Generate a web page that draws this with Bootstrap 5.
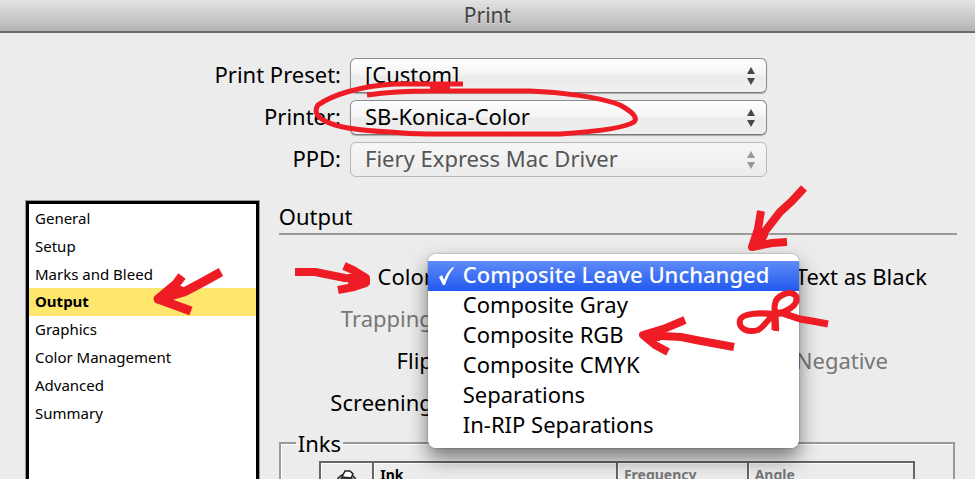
<!DOCTYPE html>
<html lang="en">
<head>
<meta charset="utf-8">
<meta name="viewport" content="width=device-width, initial-scale=1">
<title>Print</title>
<link href="https://cdn.jsdelivr.net/npm/bootstrap@5.3.0/dist/css/bootstrap.min.css" rel="stylesheet">
<style>
  body { background: #ececec; color: #000; font-family: "Noto Sans", "Open Sans", sans-serif; font-size: 22px; line-height: 30px; }
  .print-dialog { height: 100vh; overflow: hidden; }
  .title-strip { background: linear-gradient(#e4e4e4, #b4b4b4); border-bottom: 2px solid #6c6c6c; color: #444; }
  .title-strip h1 { font-size: 21px; line-height: 31px; font-weight: 400; text-shadow: 0 1px 0 #ddd; }
  .preset-grid { display: grid; grid-template-columns: 341fr 417fr 199fr; column-gap: 9px; row-gap: 7px; padding-top: 25px; }
  .preset-grid label { grid-column: 1; text-align: right; white-space: nowrap; line-height: 32px; }
  .mac-pick { position: relative; height: 35px; }
  .mac-pick select { appearance: none; width: 100%; height: 100%; padding: 0 36px 3px 14px; color: #000; font-size: 22px; line-height: 30px; border: 1px solid #8c8c8c; border-bottom-color: #777; border-radius: 6px; background: linear-gradient(#fff, #f4f4f4 45%, #ebebeb 55%, #f0f0f0); box-shadow: 0 1px 1px #aaa; }
  .mac-pick svg { position: absolute; right: 11px; top: 8px; width: 10px; height: 19px; fill: #484848; pointer-events: none; }
  .mac-pick select:disabled { color: #555; opacity: 1; border-color: #b8b8b8; background: linear-gradient(#f6f6f6, #ececec); box-shadow: none; }
  .mac-pick select:disabled + svg { fill: #999; }
  .work-area { padding: 24px 18px 0 26px; gap: 20px; }
  .section-list { flex: 0 0 25%; border: 3px solid #000; border-bottom: 0; outline: 1px solid #999; background: #fff; padding-top: 1px; }
  .section-list .list-group-item { border: 0; margin: 0; padding: 0 6px 2px; font-size: 15px; line-height: 26px; color: #000; background: transparent; }
  .section-list .list-group-item.active { background: #ffe76e; font-weight: 700; }
  .pane-title { font-size: 22px; line-height: 30px; padding-bottom: 2px; font-weight: 400; border-bottom: 2px solid #999; }
  .output-grid { display: grid; grid-template-columns: 162px 296px 1fr; column-gap: 9px; row-gap: 7px; margin-top: 25px; }
  .output-grid label { line-height: 32px; white-space: nowrap; }
  .output-grid > label { grid-column: 1; text-align: right; padding-right: 2px; }
  .tick-line { display: flex; align-items: flex-start; gap: 10px; padding-left: 13px; }
  .tick-line input { width: 18px; height: 18px; margin: 8px 0 0; }
  .dim { color: #777; }
  .pick-menu { top: -6px; left: 149px; width: 371px; padding: 7px 0; border: 0; border-radius: 8px; background: rgba(255,255,255,.99); box-shadow: 0 10px 20px rgba(0,0,0,.5), 0 0 2px rgba(0,0,0,.4); font-size: 22px; }
  .pick-menu .dropdown-item { position: relative; padding: 0 0 4px 35px; line-height: 26px; color: #000; }
  .pick-menu .dropdown-item.active { color: #fff; font-weight: 500; background: linear-gradient(#5f8bf8, #2059ee); }
  .pick-menu .dropdown-item svg { position: absolute; left: 10px; top: 5px; }
  .ink-box { border: 2px solid #999; box-shadow: inset 1px 1px 0 #fff; margin: 7px 2px 0 0; padding: 3px 38px 0 38px; }
  .ink-box legend { float: none; width: auto; font-size: 22px; line-height: 30px; margin: 0 0 0 -23px; padding: 0 2px; }
  .ink-table { width: 100%; border: 2px solid #666; table-layout: fixed; }
  .ink-table th { font-size: 14px; line-height: 20px; height: 40px; vertical-align: top; padding: 2px 7px 0 6px; border-right: 2px solid #666; box-shadow: inset 1px 1px 0 #fff; }
  .ink-table .col-print { width: 9%; padding-top: 6px; line-height: 16px; }
  .ink-table .col-ink { width: 41%; }
  .ink-table .col-freq { width: 22%; }
  .red-ink { position: absolute; left: 0; top: 0; width: 975px; height: 479px; pointer-events: none; z-index: 2000; fill: none; stroke: #ee1c25; stroke-width: 8; stroke-linejoin: round; }
</style>
<script src="https://cdn.jsdelivr.net/npm/bootstrap@5.3.0/dist/js/bootstrap.bundle.min.js"></script>
</head>
<body>
<div class="print-dialog d-flex flex-column position-relative">
  <header class="title-strip text-center flex-shrink-0"><h1 class="m-0">Print</h1></header>
  <form class="d-flex flex-column flex-grow-1">
    <div class="preset-grid">
      <label for="preset">Print Preset:</label>
      <div class="mac-pick"><select id="preset"><option>[Custom]</option></select><svg viewBox="0 0 10 19"><path d="M5 1l4 7H1zM1 12h8l-4 7z"/></svg></div>
      <label for="printer">Printer:</label>
      <div class="mac-pick"><select id="printer"><option>SB-Konica-Color</option></select><svg viewBox="0 0 10 19"><path d="M5 1l4 7H1zM1 12h8l-4 7z"/></svg></div>
      <label for="ppd">PPD:</label>
      <div class="mac-pick"><select id="ppd" disabled><option>Fiery Express Mac Driver</option></select><svg viewBox="0 0 10 19"><path d="M5 1l4 7H1zM1 12h8l-4 7z"/></svg></div>
    </div>
    <div class="work-area d-flex flex-grow-1">
      <nav class="section-list list-group rounded-0">
        <a href="#" class="list-group-item">General</a>
        <a href="#" class="list-group-item">Setup</a>
        <a href="#" class="list-group-item">Marks and Bleed</a>
        <a href="#" class="list-group-item active">Output</a>
        <a href="#" class="list-group-item">Graphics</a>
        <a href="#" class="list-group-item">Color Management</a>
        <a href="#" class="list-group-item">Advanced</a>
        <a href="#" class="list-group-item">Summary</a>
      </nav>
      <section class="flex-grow-1">
        <h2 class="pane-title m-0">Output</h2>
        <div class="output-grid position-relative">
          <label for="color">Color:</label>
          <div class="mac-pick"><select id="color"><option></option></select></div>
          <div class="tick-line"><input type="checkbox" id="textblack"><label for="textblack">Text as Black</label></div>
          <label for="trapping" class="dim">Trapping:</label>
          <div class="mac-pick"><select id="trapping" disabled><option></option></select></div>
          <label for="flip">Flip:</label>
          <div class="mac-pick"><select id="flip"><option></option></select></div>
          <div class="tick-line dim"><input type="checkbox" id="negative" disabled><label for="negative">Negative</label></div>
          <label for="screening">Screening:</label>
          <div class="mac-pick"><select id="screening"><option></option></select></div>
          <div class="pick-menu dropdown-menu show">
            <button type="button" class="dropdown-item active"><svg width="16" height="20" viewBox="0 0 16 20" fill="#fff"><path d="M1 11l3-2 2 5C8 8 11 4 15 1l1 1C12 6 9 12 7 19H5z"/></svg>Composite Leave Unchanged</button>
            <button type="button" class="dropdown-item">Composite Gray</button>
            <button type="button" class="dropdown-item">Composite RGB</button>
            <button type="button" class="dropdown-item">Composite CMYK</button>
            <button type="button" class="dropdown-item">Separations</button>
            <button type="button" class="dropdown-item">In-RIP Separations</button>
          </div>
        </div>
        <fieldset class="ink-box">
          <legend>Inks</legend>
          <table class="ink-table">
            <thead><tr>
              <th class="col-print text-center"><svg width="20" height="20" viewBox="0 0 20 20" stroke="#222" stroke-width="1.5"><path d="M2 9l4-3h10l3 3v7H2z" fill="#bbb"/><path d="M6 8l3-6h5l3 3-2 4z" fill="#fff"/><path d="M5 10h11v3H5z" fill="#222"/></svg></th>
              <th class="col-ink">Ink</th>
              <th class="col-freq dim">Frequency</th>
              <th class="dim">Angle</th>
            </tr></thead>
          </table>
        </fieldset>
      </section>
    </div>
  </form>
  <svg class="red-ink" viewBox="0 0 975 479" aria-hidden="true">
    <path stroke-width="5" d="M463 84H395C360 86 332 95 318 105Q312 114 325 121C340 129 365 131 390 132Q410 134 428 134H560C590 132 625 128 634 122Q640 116 620 105C600 97 560 92 530 91H430Q395 91 367 95M430 87h20"/>
    <path stroke-width="9" d="M221 272L203 282 186 291 158 299M182 276l-6 8L158 299l33 12M160 299l24-7-8-3z"/>
    <path d="M295 272h20l30 6 23 1M344 266l9 4 13 8v5l-12 4-16 3M352 274v8l8-1" stroke-width="8"/>
    <path stroke-width="8" d="M804 188l-12 13-12 11-14 18-15 18M761 211l-3 18-6 18 20-4 15-1M755 240l9-5-5 10"/>
    <path d="M685 320l-19 8-23 7 12 10 13 7M643 335l38 2 20 4 33 6M656 332v9"/>
    <path stroke-width="6" d="M775 314C762 313 743 312 740 320 738 329 748 333 758 330 766 326 768 316 778 314 790 310 799 304 796 296 790 289 776 296 775 304 773 313 777 320 776 331"/>
    <path stroke-width="7" d="M772 313h10l18 6 12 2 16 3M775 313v17"/>
  </svg>
</div>
</body>
</html>
